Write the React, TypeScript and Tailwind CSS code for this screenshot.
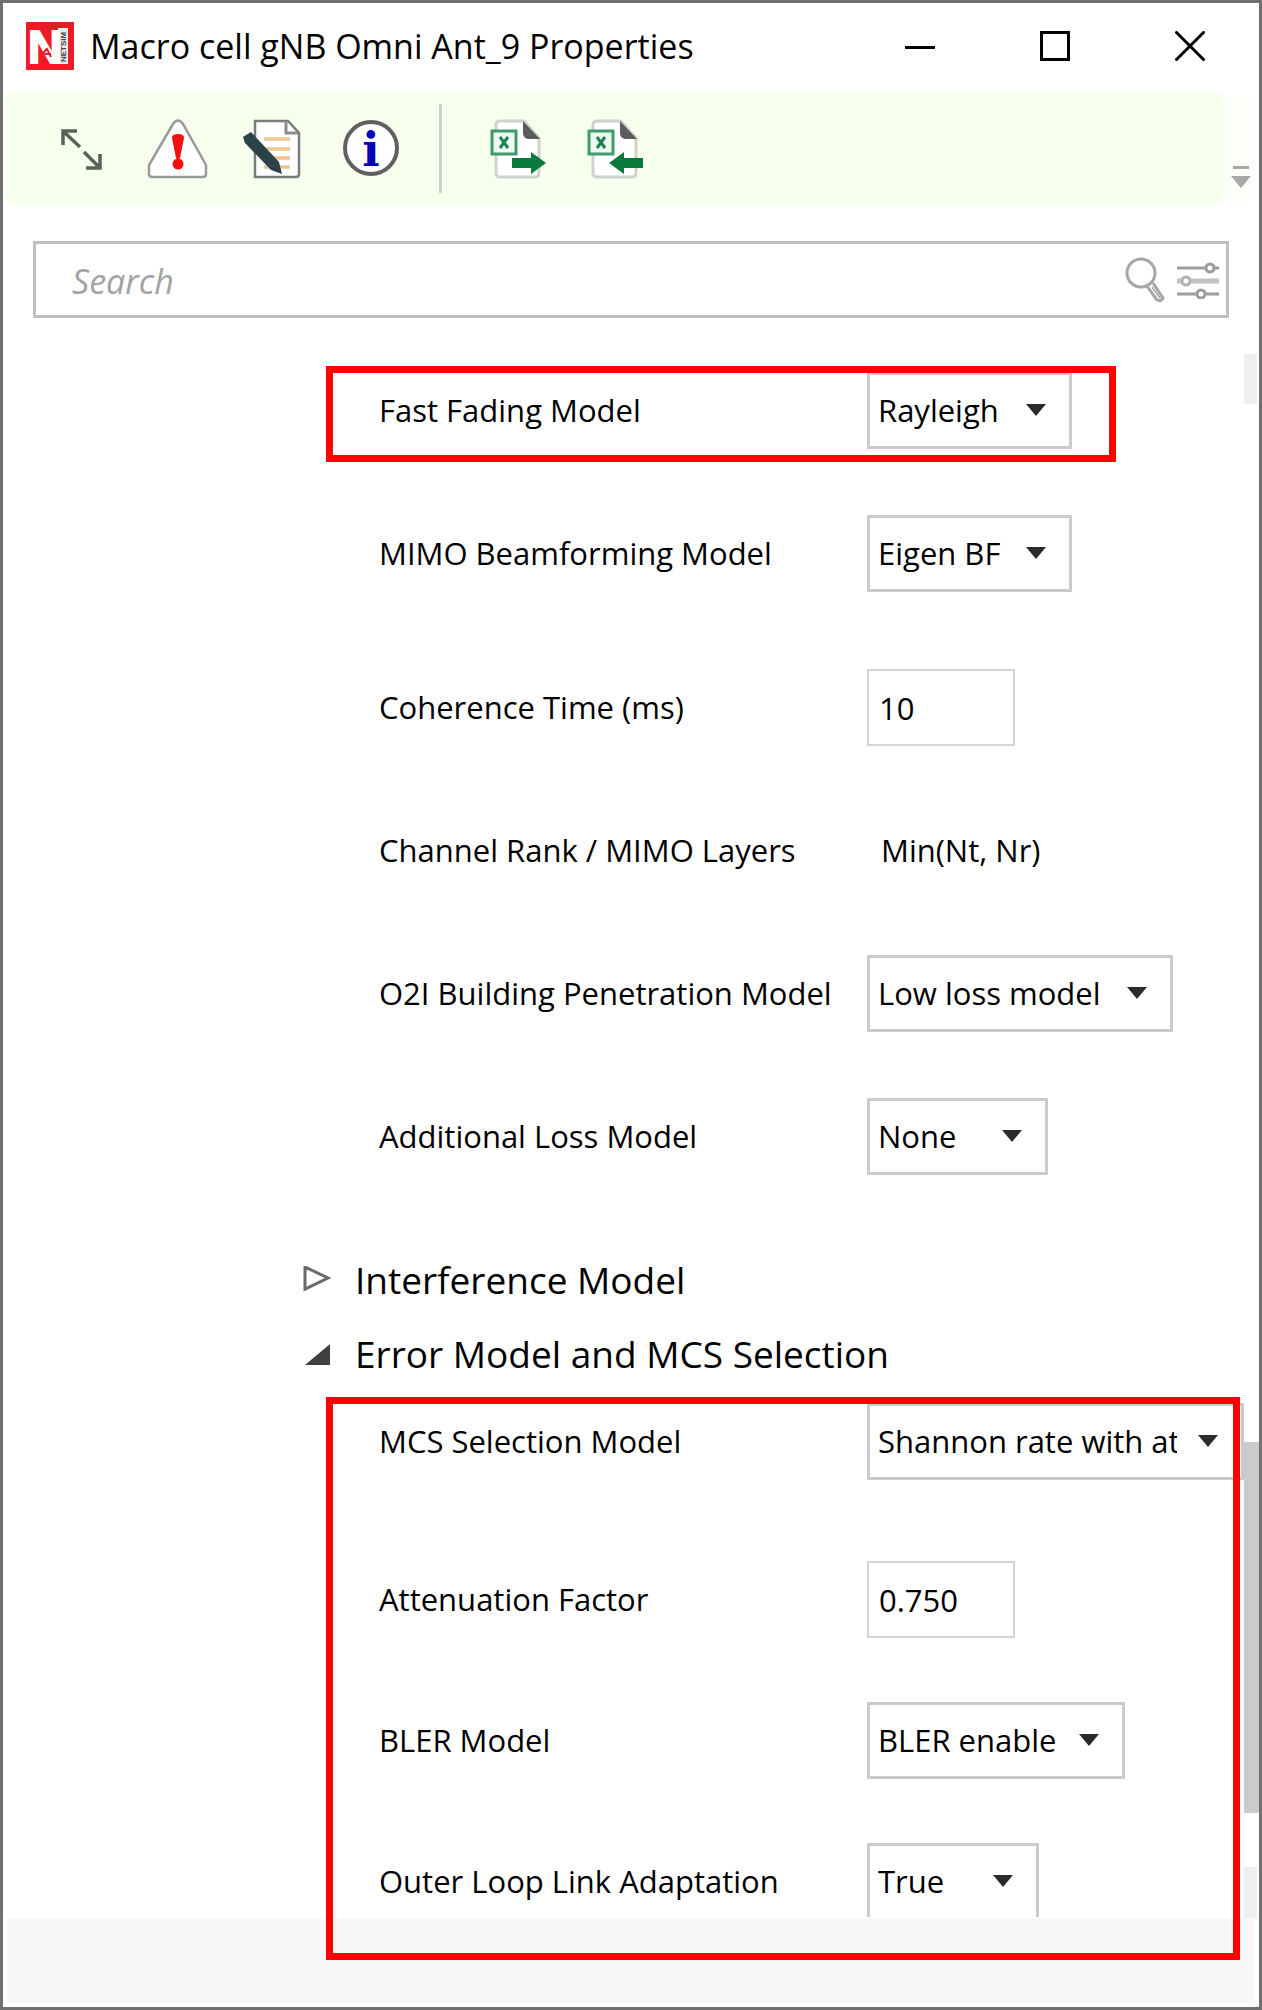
import type { ReactNode } from "react";

type Field = {
  id: string;
  label: string;
  kind: "select" | "input" | "text";
  value: string;
  width?: string;
  spacing?: string;
};

const channelFields: Field[] = [
  { id: "mimo", label: "MIMO Beamforming Model", kind: "select", value: "Eigen BF", width: "w-[205px]", spacing: "mb-[77px]" },
  { id: "coherence", label: "Coherence Time (ms)", kind: "input", value: "10", width: "w-[148px]", spacing: "mb-[66px]" },
  { id: "rank", label: "Channel Rank / MIMO Layers", kind: "text", value: "Min(Nt, Nr)", spacing: "mb-[66px]" },
  { id: "o2i", label: "O2I Building Penetration Model", kind: "select", value: "Low loss model", width: "w-[306px]", spacing: "mb-[66px]" },
  { id: "loss", label: "Additional Loss Model", kind: "select", value: "None", width: "w-[181px]" },
];

const errorFields: Field[] = [
  { id: "mcs", label: "MCS Selection Model", kind: "select", value: "Shannon rate with attenuation factor", width: "w-[377px]", spacing: "mb-[81px]" },
  { id: "attenuation", label: "Attenuation Factor", kind: "input", value: "0.750", width: "w-[148px]", spacing: "mb-16" },
  { id: "bler", label: "BLER Model", kind: "select", value: "BLER enable", width: "w-[258px]", spacing: "mb-16" },
];

function FieldControl({ field }: { field: Field }) {
  if (field.kind === "text") {
    return <output id={field.id} className="pl-[14px]">{field.value}</output>;
  }
  if (field.kind === "input") {
    return (
      <input
        id={field.id}
        defaultValue={field.value}
        className={`h-[77px] border-2 border-[#d4d4d4] bg-white pl-2.5 outline-none ${field.width}`}
      />
    );
  }
  return (
    <div className={`relative h-[77px] shrink-0 ${field.width}`}>
      <select
        id={field.id}
        className="h-full w-full appearance-none border-[3px] border-[#cbcbcb] bg-white pr-16 pl-2 outline-none"
      >
        <option>{field.value}</option>
      </select>
      <svg viewBox="0 0 20 12" className="pointer-events-none absolute top-8 right-[26px] h-3 w-5 fill-[#2b2b2b]">
        <path d="M0 0h20L10 12z" />
      </svg>
    </div>
  );
}

function FieldRow({ field }: { field: Field }) {
  return (
    <div className={`flex h-[77px] items-center ${field.spacing ?? ""}`}>
      <label htmlFor={field.id} className="w-[488px] shrink-0 whitespace-nowrap">
        {field.label}
      </label>
      <FieldControl field={field} />
    </div>
  );
}

// Red rectangle that calls out a group of fields.
function Highlight({ className }: { className: string }) {
  return <div className={`pointer-events-none absolute z-10 border-[7px] border-[#ff0000] ${className}`} />;
}

function ToolButton({ label, children }: { label: string; children: ReactNode }) {
  return (
    <button type="button" aria-label={label} className="flex h-full w-[97px] items-center justify-center">
      <svg viewBox="0 0 64 64" className="size-16" fill="none">
        {children}
      </svg>
    </button>
  );
}

function SheetIcon({ arrow }: { arrow: string }) {
  return (
    <>
      <path d="M15 4h24l15 17v35q0 4-4 4H15q-4 0-4-4V8q0-4 4-4z" fill="#fff" stroke="#d0d2cd" strokeWidth="3" />
      <path d="M38 4l17 18H43q-5-1-5-6z" fill="#5c5c5c" />
      <rect x="7" y="14" width="24" height="23" fill="#eef7f1" stroke="#3f9a6c" strokeWidth="3" />
      <path d="M15 20l8 11M23 20l-8 11" stroke="#1c8451" strokeWidth="3" />
      <path d={arrow} fill="#077a3c" />
    </>
  );
}

function TitleBar() {
  return (
    <header className="flex h-[89px] items-center pb-1 pl-[23px] pr-0.5">
      <svg viewBox="0 0 48 48" className="size-12 shrink-0 overflow-visible">
        <rect width="48" height="48" fill="#ed1c24" />
        <rect x="32" y="6" width="10" height="36" fill="#e9e9e9" />
        <text x="2" y="41" fill="#fff" stroke="#fff" strokeWidth="2" fontSize="47" fontWeight="700" fontFamily="Liberation Sans, sans-serif">N</text>
        <text x="-40" y="40" fill="#444" fontSize="8" fontWeight="700" fontFamily="Liberation Sans, sans-serif" transform="rotate(-90)">NETSIM</text>
        <path d="M16 38c1-7 3-10 5-11l4 8M19 32h6" stroke="#ed1c24" strokeWidth="2" fill="none" />
      </svg>
      <h1 className="ml-4 flex-1 truncate text-[34px] leading-[50px]">Macro cell gNB Omni Ant_9 Properties</h1>
      <button type="button" aria-label="Minimize" className="flex h-20 w-[135px] items-center justify-center">
        <svg viewBox="0 0 30 30" className="size-[30px]" stroke="#000" strokeWidth="3">
          <path d="M0 16.500h30" />
        </svg>
      </button>
      <button type="button" aria-label="Maximize" className="flex h-20 w-[135px] items-center justify-center">
        <svg viewBox="0 0 30 30" className="size-[30px]" stroke="#000" strokeWidth="3" fill="none">
          <rect x="1.500" y="1.500" width="27" height="27" />
        </svg>
      </button>
      <button type="button" aria-label="Close" className="flex h-20 w-[135px] items-center justify-center">
        <svg viewBox="0 0 30 30" className="size-[30px]" stroke="#000" strokeWidth="3" strokeLinecap="round">
          <path d="M1.500 1.500l27 27M28.500 1.500l-27 27" />
        </svg>
      </button>
    </header>
  );
}

function Toolbar() {
  return (
    <div role="toolbar" className="flex h-[113px] items-center pr-1 pl-1">
      <div className="flex h-full flex-1 items-center rounded-lg bg-[#f7ffed] pl-[25px]">
        <ToolButton label="Expand">
          <g stroke="#5c605a" strokeWidth="3.500">
            <path d="M14 28V14h14M14 14l17 16M51 37v14H37M51 51L35 35" />
          </g>
        </ToolButton>
        <ToolButton label="Warnings">
          <path d="M27 7q5-7 10 0l23 41v9q0 3-3 3H6q-3 0-3-3v-9z" fill="#fff" stroke="#9a9a9a" strokeWidth="2.500" />
          <path d="M26 21q0-4 6-4t6 4l-4 20q-2 3-4 0z" fill="#f50f0f" />
          <circle cx="32" cy="47" r="5.500" fill="#f50f0f" />
        </ToolButton>
        <ToolButton label="Edit notes">
          <path d="M12 4h33l11 12v41q0 3-3 3H12z" fill="#fff" stroke="#7b7b7b" strokeWidth="2.500" />
          <path d="M43 4v12h12" stroke="#8b8b8b" strokeWidth="3" />
          <path d="M21 22h26M21 32h26M21 41h26M21 50h26" stroke="#edc48f" strokeWidth="3.500" />
          <path d="M0 20l8-5 28 30 3 12-11-4L2 26z" fill="#2c4249" />
        </ToolButton>
        <ToolButton label="Information">
          <circle cx="31" cy="31" r="26" fill="#fff" stroke="#606060" strokeWidth="4" />
          <text x="31" y="49" textAnchor="middle" fill="#0505b5" fontSize="46" fontWeight="700" fontFamily="DejaVu Serif, serif">i</text>
        </ToolButton>
        <div className="mr-[26px] ml-[19px] h-[89px] w-[3px] bg-[#cfd2cb]" />
        <ToolButton label="Export to Excel">
          <SheetIcon arrow="M27 41h19v-6l15 11-15 11v-6H27z" />
        </ToolButton>
        <ToolButton label="Import from Excel">
          <SheetIcon arrow="M61 41H42v-6L27 46l15 11v-6h19z" />
        </ToolButton>
      </div>
      <button
        type="button"
        aria-label="Toolbar options"
        className="ml-[3px] flex h-[107px] w-[29px] items-end justify-center rounded bg-[#fdfffa] pb-3.5"
      >
        <svg viewBox="0 0 20 22" className="h-[22px] w-5 fill-[#a8a8a8]">
          <path d="M2 0h16v3H2zM0 10h20L10 22z" />
        </svg>
      </button>
    </div>
  );
}

function SearchBox() {
  return (
    <div className="mt-9 mr-[30px] ml-[30px] flex h-[77px] items-center border-[3px] border-[#c0c0c0] pr-[7px]">
      <input
        type="search"
        aria-label="Search"
        placeholder="Search"
        className="h-full min-w-0 flex-1 pt-0.5 pl-9 text-[34px] italic outline-none placeholder:text-[#a3a3a3]"
      />
      <button type="button" aria-label="Find">
        <svg viewBox="0 0 40 46" className="h-[46px] w-10" fill="none" stroke="#a6a6a6" strokeWidth="3">
          <circle cx="16" cy="16" r="14" />
          <path d="M22 29l10 14q4 2 6-2L28 26" />
          <path d="M27 30l8 11" strokeWidth="1.500" />
        </svg>
      </button>
      <button type="button" aria-label="Filter" className="ml-3">
        <svg viewBox="0 0 42 38" className="h-[38px] w-[42px]" fill="#fff" stroke="#9c9c9c" strokeWidth="3">
          <path d="M0 7h42M0 33h42" />
          <path d="M0 20h42" stroke="#c2c2c2" strokeWidth="5" />
          <circle cx="33" cy="7" r="4" />
          <circle cx="9" cy="20" r="4" stroke="#b0b0b0" />
          <circle cx="24" cy="33" r="4" />
        </svg>
      </button>
    </div>
  );
}

function ScrollBar() {
  return (
    <div className="flex w-[15px] shrink-0 flex-col pt-9">
      <div className="h-[50px] w-[13px] bg-[#efefef]" />
      <div className="grow-[1038]" />
      <div className="h-[371px] bg-[#cbcbcb]" />
      <div className="grow-[54]" />
      <div className="h-[51px] w-[13px] bg-[#efefef]" />
    </div>
  );
}

function App() {
  return (
    <div className="flex min-h-screen flex-col border-[3px] border-[#707070] bg-white font-['Open_Sans','Noto_Sans',sans-serif] text-[31px] text-black">
      <TitleBar />
      <Toolbar />
      <SearchBox />

      <div className="flex flex-1">
        <main className="min-w-0 flex-1 pt-[54px] pl-[300px]">
          <section className="ml-[23px]">
            <div className="relative mb-[66px] pl-[53px]">
              <FieldRow field={{ id: "fading", label: "Fast Fading Model", kind: "select", value: "Rayleigh", width: "w-[205px]" }} />
              <Highlight className="-top-1.5 -bottom-[13px] left-0 w-[790px]" />
            </div>
            <div className="pl-[53px]">
              {channelFields.map((field) => (
                <FieldRow key={field.id} field={field} />
              ))}
            </div>
          </section>

          <button type="button" aria-expanded="false" className="mt-[68px] flex h-[74px] items-center text-[37px]">
            <svg viewBox="0 0 28 28" className="mr-6 size-7" fill="#fff" stroke="#6a6a6a" strokeWidth="3">
              <path d="M2 1v22l23-11z" />
            </svg>
            Interference Model
          </button>
          <button type="button" aria-expanded="true" className="flex h-[74px] items-center text-[37px]">
            <svg viewBox="0 0 28 28" className="mr-6 size-7" fill="#404040">
              <path d="M27 4v21H2z" />
            </svg>
            Error Model and MCS Selection
          </button>

          <section className="relative mt-3 ml-[23px] pl-[53px]">
            {errorFields.map((field) => (
              <FieldRow key={field.id} field={field} />
            ))}
            {/* The last row is cut off by the footer */}
            <div className="h-[74px] overflow-hidden">
              <FieldRow field={{ id: "olla", label: "Outer Loop Link Adaptation", kind: "select", value: "True", width: "w-[172px]" }} />
            </div>
            <Highlight className="-top-1.5 right-1 -bottom-[43px] left-0" />
          </section>
        </main>
        <ScrollBar />
      </div>

      <footer className="mx-1 mb-1 h-[85px] bg-[#f7f7f7]" />
    </div>
  );
}

export default App;
